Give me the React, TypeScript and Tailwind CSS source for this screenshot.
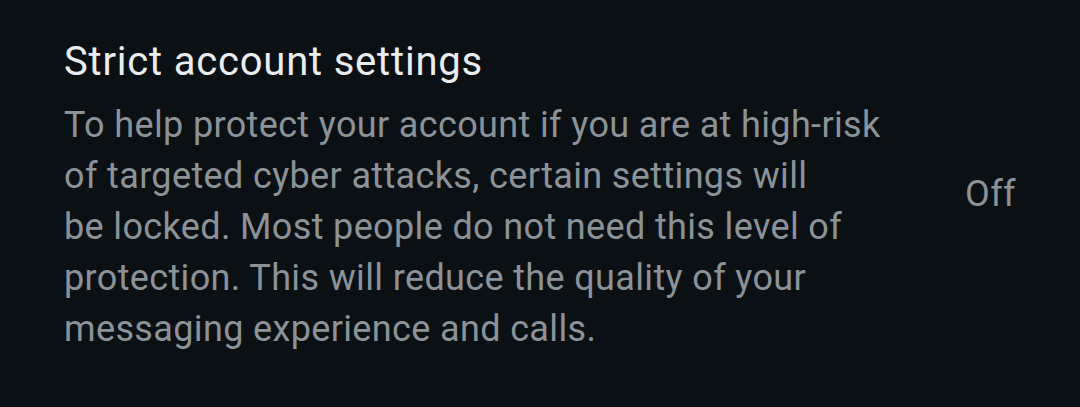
const lines = [
  "To help protect your account if you are at high-risk",
  "of targeted cyber attacks, certain settings will",
  "be locked. Most people do not need this level of",
  "protection. This will reduce the quality of your",
  "messaging experience and calls.",
];

export default function App() {
  return (
    <div
      className="flex h-[407px] w-full items-start bg-[#0b1014] px-16 pt-[38px]"
      style={{ fontFamily: "Roboto, 'Noto Sans', sans-serif" }}
    >
      <div className="w-[840px] shrink-0">
        <h2 className="text-[40px] leading-[48px] tracking-[0.02em] text-[#e9edef]">
          Strict account settings
        </h2>
        <p className="mt-[14px] text-[36px] leading-[51px] tracking-[0.01em] text-[#8b9398]">
          {lines.map((l) => (
            <span key={l} className="block whitespace-nowrap">
              {l}
            </span>
          ))}
        </p>
      </div>
      <div className="ml-auto mt-[131px] text-[36px] leading-[51px] tracking-[0.01em] text-[#8b9398]">
        Off
      </div>
    </div>
  );
}
